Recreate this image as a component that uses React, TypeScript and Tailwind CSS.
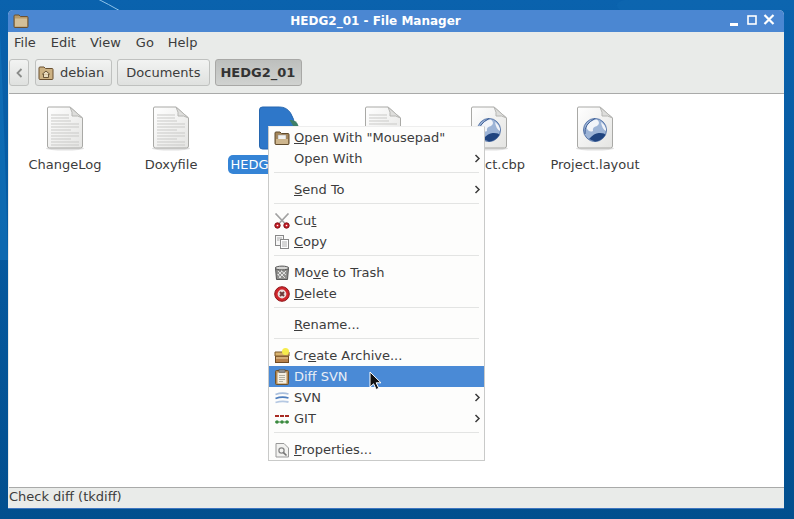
import type { ReactNode } from "react";

const font = { fontFamily: '"DejaVu Sans", sans-serif' };

function PaperBase({ children }: { children?: ReactNode }) {
  return (
    <svg width="48" height="48" viewBox="0 0 48 48">
      <defs>
        <linearGradient id="paperFill" x1="0" y1="0" x2="1" y2="1">
          <stop offset="0" stopColor="#ffffff" />
          <stop offset="1" stopColor="#e4e4e2" />
        </linearGradient>
      </defs>
      <ellipse cx="24" cy="44.5" rx="19" ry="2" fill="#000" opacity="0.12" />
      <path d="M6.5 4 Q6.5 3 8 3 H29 L41.5 14 V42 Q41.5 44 39.5 44 H8.5 Q6.5 44 6.5 42 Z" fill="url(#paperFill)" stroke="#a9a9a6" />
      <path d="M29 3 Q32 9 31 12 Q37 11 41.5 14 Z" fill="#dededc" stroke="#b5b5b2" />
      {children}
    </svg>
  );
}

function TextFileIcon() {
  return (
    <PaperBase>
      {[11, 14, 17, 20, 23, 26, 29, 32, 35, 38, 41].map((y, i) => (
        <line key={y} x1="10" x2={i % 3 === 2 ? 30 : i < 2 ? 28 : 38} y1={y} y2={y} stroke="#c9c9c7" strokeWidth="1" />
      ))}
    </PaperBase>
  );
}

function GlobeFileIcon() {
  return (
    <PaperBase>
      <circle cx="24" cy="26" r="11.5" fill="#9db4d6" stroke="#5a78aa" />
      <path d="M15 23 Q19 16 26 15.5 Q30 19 26 22 Q21 23 22 27 Q18 29 15 23Z" fill="#f1f4f9" />
      <path d="M18 35 Q24 28 29 29 Q34 29 34.5 31 Q29 38 24 37.5Z" fill="#20447f" />
      <path d="M30 18 Q35.5 22 35 27 Q31 25 30 18Z" fill="#f1f4f9" />
      <path d="M24 14.5 Q13 20 14 30" stroke="#3f5f96" strokeWidth="1" fill="none" />
    </PaperBase>
  );
}

function BlueFileIcon() {
  return (
    <svg width="48" height="48" viewBox="-1.5 0 48 48">
      <path d="M5 6 Q5 3 8 3 H25 Q32 3 36 9 Q40 15 40 22 V42 Q40 45 37 45 H8 Q5 45 5 42 Z" fill="#2e77c9" stroke="#2767b0" />
      <path d="M35 16 Q42 15 44 22 L40 24 Z" fill="#3f7f68" />
    </svg>
  );
}

function FolderIcon({ className = "" }: { className?: string }) {
  return (
    <svg className={className} width="16" height="16" viewBox="0 0 16 16">
      <path d="M1 3 Q1 2 2 2 H6 L7.5 3.5 H14 Q15 3.5 15 4.5 V13.5 Q15 14.5 14 14.5 H2 Q1 14.5 1 13.5 Z" fill="#b89a68" stroke="#6b5030" />
      <rect x="2" y="5.5" width="12" height="8" fill="#d3bf98" />
    </svg>
  );
}

function HomeFolderIcon() {
  return (
    <svg width="16" height="16" viewBox="0 0 16 16">
      <path d="M1 3 Q1 2 2 2 H6 L7.5 3.5 H14 Q15 3.5 15 4.5 V13.5 Q15 14.5 14 14.5 H2 Q1 14.5 1 13.5 Z" fill="#cdb283" stroke="#6b5030" />
      <path d="M4 9.5 L8 6 L12 9.5 M5.5 9 V12.5 H10.5 V9" fill="#e9dcc0" stroke="#5e4a2c" strokeWidth="0.9" />
    </svg>
  );
}

function OpenWithIcon() {
  return (
    <svg width="16" height="16" viewBox="0 0 16 16">
      <path d="M1 3 Q1 2 2 2 H6 L7.5 3.5 H14 Q15 3.5 15 4.5 V13.5 Q15 14.5 14 14.5 H2 Q1 14.5 1 13.5 Z" fill="#a5865a" stroke="#5f4a2c" />
      <rect x="4" y="5" width="8" height="5" fill="#f2f2f0" stroke="#999" strokeWidth="0.5" />
      <rect x="2" y="9" width="12" height="5" fill="#cdb58d" />
    </svg>
  );
}

function ScissorsIcon() {
  return (
    <svg width="16" height="16" viewBox="0 0 16 16">
      <path d="M1.5 0.5 L10.5 10 M14.5 0.5 L5.5 10" stroke="#a2a2a2" strokeWidth="1.7" fill="none" />
      <circle cx="3.5" cy="12.5" r="2.7" fill="#c9202a" stroke="#7e1015" />
      <circle cx="12.5" cy="12.5" r="2.7" fill="#c9202a" stroke="#7e1015" />
      <circle cx="3.5" cy="12.5" r="0.8" fill="#fff" />
      <circle cx="12.5" cy="12.5" r="0.8" fill="#fff" />
    </svg>
  );
}

function CopyIcon() {
  return (
    <svg width="16" height="16" viewBox="0 0 16 16">
      <rect x="1.5" y="1.5" width="8" height="10" fill="#f6f6f6" stroke="#888" />
      <rect x="6.5" y="5.5" width="8" height="9" fill="#fff" stroke="#888" />
      <path d="M3 4 H8 M3 6 H5.5 M8 8 H13 M8 10 H13 M8 12 H13" stroke="#999" strokeWidth="0.8" />
    </svg>
  );
}

function TrashIcon() {
  return (
    <svg width="16" height="16" viewBox="0 0 16 16">
      <path d="M1.5 3 H14.5 L13.5 14.5 H2.5 Z" fill="#8f8f8d" stroke="#555" />
      <ellipse cx="8" cy="3" rx="6.8" ry="1.9" fill="#d5d5d3" stroke="#555" />
      <path d="M4 6 L11 13 M7 5.5 L12 10 M12 6 L5 13 M8 6 L4 10 M3.5 9 L7 13" stroke="#e9e9e9" strokeWidth="0.9" />
    </svg>
  );
}

function DeleteIcon() {
  return (
    <svg width="16" height="16" viewBox="0 0 16 16">
      <circle cx="8" cy="8" r="7.3" fill="#d0262c" stroke="#8f1418" />
      <circle cx="8" cy="8" r="4.4" fill="#ece2e0" />
      <path d="M6 6 L10 10 M10 6 L6 10" stroke="#6e3a3a" strokeWidth="2" />
    </svg>
  );
}

function ArchiveIcon() {
  return (
    <svg width="16" height="16" viewBox="0 0 16 16">
      <rect x="1.5" y="8" width="13" height="6.5" fill="#b8814a" stroke="#6f4a22" />
      <path d="M1 4 H15 V8 H1 Z" fill="#d9b36f" stroke="#7d5a2a" />
      <circle cx="11.5" cy="3.5" r="3.5" fill="#f6ec4c" />
      <rect x="2" y="9.5" width="12" height="1" fill="#f0d9a8" />
    </svg>
  );
}

function ClipboardIcon() {
  return (
    <svg width="16" height="16" viewBox="0 0 16 16">
      <rect x="1.5" y="1.5" width="13" height="14" rx="1" fill="#b48a55" stroke="#6f5228" />
      <rect x="3.5" y="3.5" width="9" height="11" fill="#f4efe2" />
      <rect x="5" y="0.5" width="6" height="3" fill="#8b8b88" stroke="#555" strokeWidth="0.5" />
      <path d="M5 6.5 H11 M5 8.5 H11 M5 10.5 H11 M5 12.5 H9" stroke="#a3a08f" strokeWidth="0.8" />
    </svg>
  );
}

function SvnIcon() {
  return (
    <svg width="16" height="16" viewBox="0 0 16 16">
      <path d="M1.5 4.5 Q8 2 14.5 4" stroke="#a9bfdd" strokeWidth="1.8" fill="none" />
      <path d="M1.5 8.5 Q8 6 14.5 8" stroke="#4f7fbe" strokeWidth="1.8" fill="none" />
      <path d="M1.5 12.5 Q8 10.5 14.5 12" stroke="#b5c8e2" strokeWidth="1.8" fill="none" />
    </svg>
  );
}

function GitIcon() {
  return (
    <svg width="16" height="16" viewBox="0 0 16 16">
      <path d="M1 5 H15" stroke="#a82a22" strokeWidth="2" strokeDasharray="4 1" />
      <circle cx="3" cy="11" r="1.7" fill="#3b8a3e" />
      <circle cx="8" cy="11" r="1.7" fill="#3b8a3e" />
      <circle cx="13" cy="11" r="1.7" fill="#3b8a3e" />
      <path d="M1 11 H15" stroke="#3b8a3e" />
    </svg>
  );
}

function PropertiesIcon() {
  return (
    <svg width="16" height="16" viewBox="0 0 16 16">
      <path d="M2 1.5 H10 L14.5 6 V15 H2 Z" fill="#f2f2f0" stroke="#999" />
      <circle cx="7.5" cy="8.5" r="2.6" fill="none" stroke="#888" strokeWidth="1.3" />
      <path d="M9.2 10.4 L12.5 13.5" stroke="#777" strokeWidth="1.7" />
    </svg>
  );
}

function FileItem({ name, icon, selected }: { name: string; icon: ReactNode; selected?: boolean }) {
  return (
    <div className="flex w-[106px] flex-col items-center">
      <div className="h-[48px]">{icon}</div>
      <span
        className={
          selected
            ? "ml-[4px] mt-[3px] rounded-[5px] bg-[#3584d6] px-[2px] text-[13px] leading-[19px] text-white"
            : "mt-[3px] px-[2px] text-[13px] leading-[19px] text-[#3c3c3c]"
        }
      >
        {name}
      </span>
    </div>
  );
}

function PathButton({ children, active, plain }: { children: ReactNode; active?: boolean; plain?: boolean }) {
  return (
    <div
      className={
        active
          ? "flex h-[27px] items-center rounded-[3px] border border-[#a8a8a6] bg-gradient-to-b from-[#bdbfbd] to-[#d0d2d0] pl-[4px] pr-[6px] text-[13px] font-bold text-[#333]"
          : plain
            ? "flex h-[27px] items-center rounded-[3px] border border-[#bfc1bf] bg-gradient-to-b from-[#f2f3f2] to-[#dfe1df] pl-[8px] pr-[9px] text-[13px] text-[#3c3c3c]"
            : "flex h-[27px] items-center gap-[6px] rounded-[3px] border border-[#bfc1bf] bg-gradient-to-b from-[#f2f3f2] to-[#dfe1df] pl-[2px] pr-[7px] text-[13px] text-[#3c3c3c]"
      }
    >
      {children}
    </div>
  );
}

function Sep() {
  return (
    <div className="flex h-[10px] items-start px-[5px] pt-[3px]">
      <div className="h-px w-full bg-[#e3e4e3]" />
    </div>
  );
}

function MenuRow({ icon, children, submenu, hover }: { icon?: ReactNode; children: ReactNode; submenu?: boolean; hover?: boolean }) {
  return (
    <div className={hover ? "flex h-[21px] items-center bg-[#4a8ad6] text-[#e9eef5]" : "flex h-[21px] items-center text-[#3c3c3c]"}>
      <div className="ml-[5px] flex w-[20px] justify-start">{icon}</div>
      <span className="flex-1 text-[13px] leading-[21px]">{children}</span>
      {submenu && (
        <svg className="mr-[3px]" width="7" height="9" viewBox="0 0 7 9">
          <path d="M1.5 1 L5 4.5 L1.5 8" fill="none" stroke="#3c3c3c" strokeWidth="1.5" />
        </svg>
      )}
    </div>
  );
}

function ContextMenu() {
  return (
    <div className="absolute left-[260px] top-[116px] w-[217px] border border-[#c9cac9] border-t-[#eeeeee] bg-[#fdfdfc]">
      <MenuRow icon={<OpenWithIcon />}><span className="underline">O</span>pen With "Mousepad"</MenuRow>
      <MenuRow submenu>Open With</MenuRow>
      <Sep />
      <MenuRow submenu><span className="underline">S</span>end To</MenuRow>
      <Sep />
      <MenuRow icon={<ScissorsIcon />}>Cu<span className="underline">t</span></MenuRow>
      <MenuRow icon={<CopyIcon />}><span className="underline">C</span>opy</MenuRow>
      <Sep />
      <MenuRow icon={<TrashIcon />}>Mo<span className="underline">v</span>e to Trash</MenuRow>
      <MenuRow icon={<DeleteIcon />}><span className="underline">D</span>elete</MenuRow>
      <Sep />
      <MenuRow><span className="underline">R</span>ename...</MenuRow>
      <Sep />
      <MenuRow icon={<ArchiveIcon />}>Cr<span className="underline">e</span>ate Archive...</MenuRow>
      <MenuRow icon={<ClipboardIcon />} hover>Diff SVN</MenuRow>
      <MenuRow icon={<SvnIcon />} submenu>SVN</MenuRow>
      <MenuRow icon={<GitIcon />} submenu>GIT</MenuRow>
      <Sep />
      <MenuRow icon={<PropertiesIcon />}><span className="underline">P</span>roperties...</MenuRow>
    </div>
  );
}

function Cursor() {
  return (
    <svg className="absolute left-[361px] top-[361px]" width="14" height="20" viewBox="0 0 14 20">
      <path d="M1 1 V16 L4.6 12.8 L7.2 18.5 L9.8 17.3 L7.2 11.8 H12 Z" fill="#111" stroke="#fff" strokeWidth="1" />
    </svg>
  );
}

export default function App() {
  return (
    <div
      style={font}
      className="relative h-[519px] w-[794px] overflow-hidden bg-gradient-to-b from-[#0a62ad] to-[#024f8e] pl-[8px] pt-[10px]"
    >
      {/* wallpaper streaks */}
      <svg className="absolute left-0 top-0" width="794" height="519" viewBox="0 0 794 519">
        <path d="M96 -2 Q108 4 122 12" stroke="#8fc3ea" strokeWidth="1" fill="none" />
        <path d="M620 10 Q608 0 640 -2 L794 -2 V10 Z" fill="#0d68b2" opacity="0.5" />
        <path d="M0 30 Q5 140 8 260 L0 260 Z" fill="#1275bd" opacity="0.6" />
        <path d="M784 200 Q790 300 794 380 V200 Z" fill="#0b4f90" opacity="0.6" />
      </svg>

      <div className="relative flex h-[499px] w-[776px] flex-col overflow-hidden rounded-t-[5px] bg-[#e9ebe9]">
        {/* title bar */}
        <div className="flex h-[22px] items-center bg-[#4b87d2] pl-[5px] pr-[9px]">
          <FolderIcon />
          <span className="flex-1 pr-[5px] text-center text-[12px] font-bold text-white">HEDG2_01 - File Manager</span>
          <div className="flex items-center gap-[5px]">
            <svg width="14" height="16" viewBox="0 0 14 16">
              <rect x="3" y="10" width="8" height="3" fill="#fff" />
            </svg>
            <svg width="12" height="16" viewBox="0 0 12 16">
              <rect x="2" y="3" width="8" height="8" fill="none" stroke="#fff" strokeWidth="1.6" />
            </svg>
            <svg width="12" height="16" viewBox="0 0 12 16">
              <path d="M1.5 2 L10.5 11 M10.5 2 L1.5 11" stroke="#fff" strokeWidth="2.2" />
            </svg>
          </div>
        </div>

        {/* menu bar */}
        <div className="flex h-[22px] items-center pl-[6px] text-[13px] text-[#3c3c3c]">
          <span className="mr-[15px]">File</span>
          <span className="mr-[14px]">Edit</span>
          <span className="mr-[15px]">View</span>
          <span className="mr-[14px]">Go</span>
          <span>Help</span>
        </div>

        {/* path bar */}
        <div className="flex h-[39px] items-start gap-[5px] pl-[1px] pt-[5px]">
          <div className="flex h-[27px] w-[20px] items-center justify-center rounded-[3px] border border-[#bfc1bf] bg-gradient-to-b from-[#f2f3f2] to-[#dfe1df]">
            <svg width="7" height="10" viewBox="0 0 7 10">
              <path d="M5.5 1 L1.5 5 L5.5 9" fill="none" stroke="#8a8c8a" strokeWidth="1.8" />
            </svg>
          </div>
          <div className="ml-[1px]">
            <PathButton><HomeFolderIcon /><span>debian</span></PathButton>
          </div>
          <PathButton plain>Documents</PathButton>
          <PathButton active>HEDG2_01</PathButton>
        </div>

        {/* file view */}
        <div className="ml-[1px] flex flex-1 items-start border-y border-[#a9aaa9] bg-white pl-[3px] pt-[10px]">
          <FileItem name="ChangeLog" icon={<TextFileIcon />} />
          <FileItem name="Doxyfile" icon={<TextFileIcon />} />
          <FileItem name="HEDG2_01.cpp" icon={<BlueFileIcon />} selected />
          <FileItem name="Makefile" icon={<TextFileIcon />} />
          <FileItem name="Project.cbp" icon={<GlobeFileIcon />} />
          <FileItem name="Project.layout" icon={<GlobeFileIcon />} />
        </div>

        {/* status bar */}
        <div className="flex h-[20px] items-center pb-[2px] pl-[1px] text-[13px] text-[#3c3c3c]">Check diff (tkdiff)</div>
        <div className="h-px bg-[#3f76c0]" />

        <ContextMenu />
        <Cursor />
      </div>
    </div>
  );
}
